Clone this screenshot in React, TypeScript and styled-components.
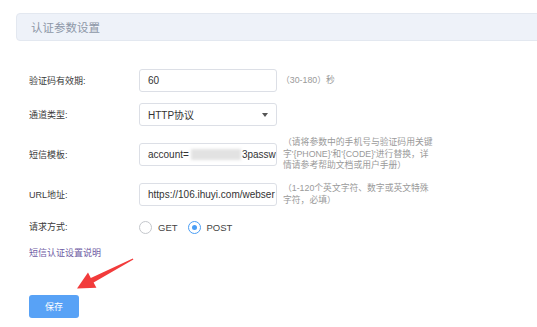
import React from "react"
import styled, { createGlobalStyle } from "styled-components"

const GlobalStyle = createGlobalStyle`
    html, body {
        margin: 0;
        padding: 0;
        background: #ffffff;
        overflow: hidden;
    }
    body {
        font-family: "Liberation Sans", "Noto Sans CJK SC", sans-serif;
        color: #333333;
    }
`

const Page = styled.div`
    position: relative;
    width: 537px;
    height: 327px;
    padding: 13px 0 0 16px;
    box-sizing: border-box;
`

const SectionHeader = styled.div`
    height: 26px;
    margin-right: -12px;
    display: flex;
    align-items: center;
    padding-left: 14px;
    background: #eef2f9;
    border: 1px solid #e3e8f0;
    border-radius: 4px;
    font-size: 11.5px;
    color: #8d97a7;
`

const Form = styled.div`
    display: flex;
    flex-direction: column;
    gap: 11px;
    padding: 28px 0 0 13px;
`

const Row = styled.div<{ $height?: number }>`
    display: flex;
    align-items: center;
    min-height: ${(p) => p.$height ?? 23}px;
`

const Label = styled.div`
    width: 110px;
    flex-shrink: 0;
    font-size: 9px;
    line-height: 12px;
    color: #3a3a3a;
`

const Field = styled.div`
    width: 138px;
    height: 23px;
    flex-shrink: 0;
    box-sizing: border-box;
    border: 1px solid #dcdfe6;
    border-radius: 3px;
    display: flex;
    align-items: center;
    padding: 0 8px;
    font-size: 10px;
    color: #333333;
    white-space: nowrap;
    overflow: hidden;
`

const SelectField = styled(Field)`
    justify-content: space-between;
    padding-right: 8px;
`

const Caret = styled.span`
    width: 0;
    height: 0;
    border-left: 3px solid transparent;
    border-right: 3px solid transparent;
    border-top: 4px solid #555555;
`

const Blurred = styled.span`
    display: inline-block;
    flex-shrink: 0;
    width: 50px;
    height: 11px;
    margin: 0 1px 0 2px;
    background: #e2e2e2;
    filter: blur(1.5px);
`

const Hint = styled.div<{ $offset?: number }>`
    margin-left: ${(p) => p.$offset ?? 6}px;
    font-size: 8.8px;
    line-height: 11.5px;
    color: #9a9a9a;
`

const HintLine = styled.span`
    display: block;
    white-space: nowrap;
`

const RadioGroup = styled.div`
    display: flex;
    align-items: center;
    gap: 10px;
`

const RadioOption = styled.label`
    display: flex;
    align-items: center;
    gap: 6px;
    font-size: 9.5px;
    color: #444444;
`

const RadioCircle = styled.span<{ $checked?: boolean }>`
    width: 13px;
    height: 13px;
    box-sizing: border-box;
    border-radius: 50%;
    border: 1px solid ${(p) => (p.$checked ? "#4a9ef5" : "#c4c7cc")};
    display: flex;
    align-items: center;
    justify-content: center;
    &::after {
        content: "";
        width: 5px;
        height: 5px;
        border-radius: 50%;
        background: ${(p) => (p.$checked ? "#4a9ef5" : "transparent")};
    }
`

const HelpLink = styled.a`
    display: block;
    margin: 9px 0 0 13px;
    font-size: 9px;
    line-height: 14px;
    color: #6e5ba3;
    text-decoration: none;
`

const SaveButton = styled.button`
    display: block;
    margin: 35px 0 0 13px;
    width: 50px;
    height: 23px;
    border: none;
    border-radius: 3px;
    background: #58a2f6;
    color: #ffffff;
    font-family: "Noto Sans CJK SC", sans-serif;
    font-size: 9px;
    padding: 0;
`

const Arrow = styled.svg`
    position: absolute;
    left: 0;
    top: 0;
    pointer-events: none;
`

const App: React.FC = () => (
    <Page>
        <GlobalStyle />
        <SectionHeader>认证参数设置</SectionHeader>
        <Form>
            <Row>
                <Label>验证码有效期:</Label>
                <Field>60</Field>
                <Hint $offset={4}>（30-180）秒</Hint>
            </Row>
            <Row>
                <Label>通道类型:</Label>
                <SelectField>
                    <span>HTTP协议</span>
                    <Caret />
                </SelectField>
            </Row>
            <Row $height={35}>
                <Label>短信模板:</Label>
                <Field>
                    account=<Blurred />3passw
                </Field>
                <Hint>
                    <HintLine>（请将参数中的手机号与验证码用关键</HintLine>
                    <HintLine>字'{"{PHONE}"}'和'{"{CODE}"}'进行替换，详</HintLine>
                    <HintLine>情请参考帮助文档或用户手册）</HintLine>
                </Hint>
            </Row>
            <Row>
                <Label>URL地址:</Label>
                <Field>https://106.ihuyi.com/webser</Field>
                <Hint>
                    <HintLine>（1-120个英文字符、数字或英文特殊</HintLine>
                    <HintLine>字符，必填）</HintLine>
                </Hint>
            </Row>
            <Row $height={20}>
                <Label>请求方式:</Label>
                <RadioGroup>
                    <RadioOption>
                        <RadioCircle />
                        GET
                    </RadioOption>
                    <RadioOption>
                        <RadioCircle $checked />
                        POST
                    </RadioOption>
                </RadioGroup>
            </Row>
        </Form>
        <HelpLink href="#">短信认证设置说明</HelpLink>
        <SaveButton>保存</SaveButton>
        <Arrow width="537" height="327" viewBox="0 0 537 327">
            <polygon
                points="133.4,259.6 93.6,282.6 96.4,287.8 77,288.5 88,272.4 90.8,278 132.8,258.6"
                fill="#f23b3b"
            />
        </Arrow>
    </Page>
)

export default App
